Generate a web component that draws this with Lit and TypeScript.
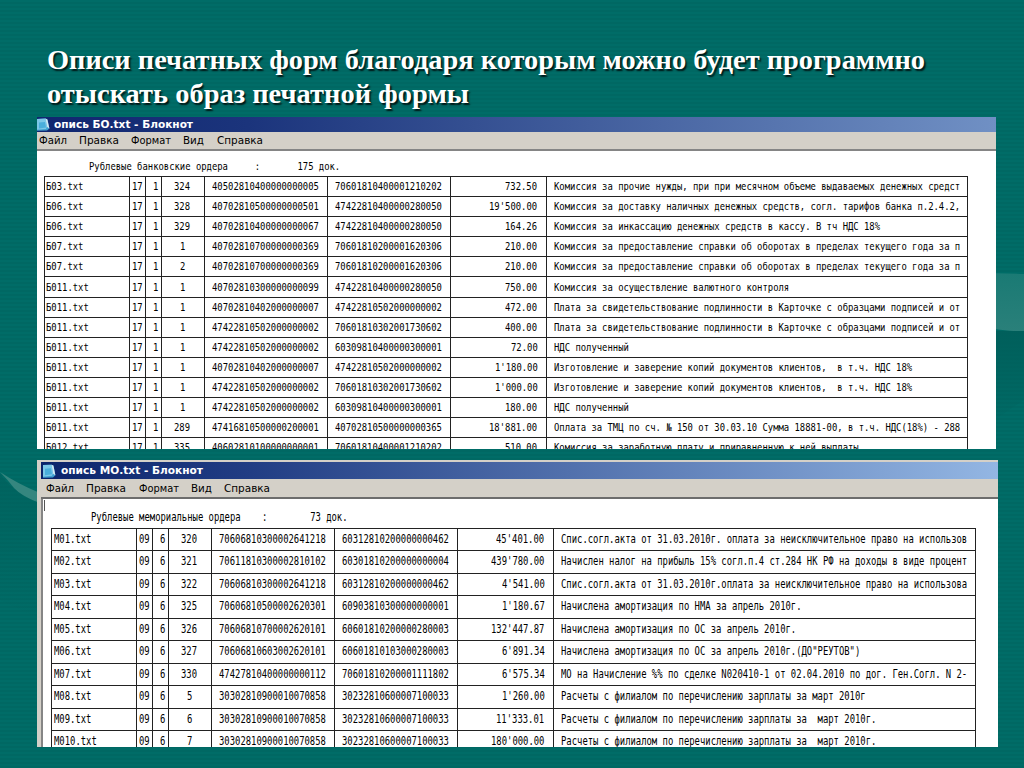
import { LitElement, html, css, svg } from "lit";
import { customElement, property } from "lit/decorators.js";

const CHAR = 5.345;

type Row = [string, string, string, string, string, string, string, string];

const BANK: Row[] = [
  ["Б03.txt", "17", "1", "324", "40502810400000000005", "70601810400001210202", "732.50", "Комиссия за прочие нужды, при при месячном объеме выдаваемых денежных средст"],
  ["Б06.txt", "17", "1", "328", "40702810500000000501", "47422810400000280050", "19'500.00", "Комиссия за доставку наличных денежных средств, согл. тарифов банка п.2.4.2,"],
  ["Б06.txt", "17", "1", "329", "40702810400000000067", "47422810400000280050", "164.26", "Комиссия за инкассацию денежных средств в кассу. В тч НДС 18%"],
  ["Б07.txt", "17", "1", "1", "40702810700000000369", "70601810200001620306", "210.00", "Комиссия за предоставление справки об оборотах в пределах текущего года за п"],
  ["Б07.txt", "17", "1", "2", "40702810700000000369", "70601810200001620306", "210.00", "Комиссия за предоставление справки об оборотах в пределах текущего года за п"],
  ["Б011.txt", "17", "1", "1", "40702810300000000099", "47422810400000280050", "750.00", "Комиссия за осуществление валютного контроля"],
  ["Б011.txt", "17", "1", "1", "40702810402000000007", "47422810502000000002", "472.00", "Плата за свидетельствование подлинности в Карточке с образцами подписей и от"],
  ["Б011.txt", "17", "1", "1", "47422810502000000002", "70601810302001730602", "400.00", "Плата за свидетельствование подлинности в Карточке с образцами подписей и от"],
  ["Б011.txt", "17", "1", "1", "47422810502000000002", "60309810400000300001", "72.00", "НДС полученный"],
  ["Б011.txt", "17", "1", "1", "40702810402000000007", "47422810502000000002", "1'180.00", "Изготовление и заверение копий документов клиентов,  в т.ч. НДС 18%"],
  ["Б011.txt", "17", "1", "1", "47422810502000000002", "70601810302001730602", "1'000.00", "Изготовление и заверение копий документов клиентов,  в т.ч. НДС 18%"],
  ["Б011.txt", "17", "1", "1", "47422810502000000002", "60309810400000300001", "180.00", "НДС полученный"],
  ["Б011.txt", "17", "1", "289", "47416810500000200001", "40702810500000000365", "18'881.00", "Оплата за ТМЦ по сч. № 150 от 30.03.10 Сумма 18881-00, в т.ч. НДС(18%) - 288"],
  ["Б012.txt", "17", "1", "335", "40602810100000000001", "70601810400001210202", "510.00", "Комиссия за заработную плату и приравненную к ней выплаты"],
];

const MEMO: Row[] = [
  ["М01.txt", "09", "6", "320", "70606810300002641218", "60312810200000000462", "45'401.00", "Спис.согл.акта от 31.03.2010г. оплата за неисключительное право на использов"],
  ["М02.txt", "09", "6", "321", "70611810300002810102", "60301810200000000004", "439'780.00", "Начислен налог на прибыль 15% согл.п.4 ст.284 НК РФ на доходы в виде процент"],
  ["М03.txt", "09", "6", "322", "70606810300002641218", "60312810200000000462", "4'541.00", "Спис.согл.акта от 31.03.2010г.оплата за неисключительное право на использова"],
  ["М04.txt", "09", "6", "325", "70606810500002620301", "60903810300000000001", "1'180.67", "Начислена амортизация по НМА за апрель 2010г."],
  ["М05.txt", "09", "6", "326", "70606810700002620101", "60601810200000280003", "132'447.87", "Начислена амортизация по ОС за апрель 2010г."],
  ["М06.txt", "09", "6", "327", "70606810603002620101", "60601810103000280003", "6'891.34", "Начислена амортизация по ОС за апрель 2010г.(ДО\"РЕУТОВ\")"],
  ["М07.txt", "09", "6", "330", "47427810400000000112", "70601810200001111802", "6'575.34", "МО на Начисление %% по сделке N020410-1 от 02.04.2010 по дог. Ген.Согл. N 2-"],
  ["М08.txt", "09", "6", "5", "30302810900010070858", "30232810600007100033", "1'260.00", "Расчеты с филиалом по перечислению зарплаты за март 2010г"],
  ["М09.txt", "09", "6", "6", "30302810900010070858", "30232810600007100033", "11'333.01", "Расчеты с филиалом по перечислению зарплаты за  март 2010г."],
  ["М010.txt", "09", "6", "7", "30302810900010070858", "30232810600007100033", "180'000.00", "Расчеты с филиалом по перечислению зарплаты за  март 2010г."],
];

/** Single line of text stretched horizontally to an exact width. */
@customElement("fit-text")
class FitText extends LitElement {
  @property() text = "";
  @property({ type: Number }) width = 0;

  static styles = css`
    :host { display: inline-block; flex: none; white-space: pre; }
    .ink { display: inline-block; transform-origin: 0 50%; }
  `;

  render() {
    return html`<span class="ink">${this.text}</span>`;
  }

  updated() {
    this.style.width = `${this.width}px`;
    const ink = this.renderRoot.querySelector(".ink") as HTMLElement;
    ink.style.transform = "none";
    const natural = ink.getBoundingClientRect().width;
    if (natural > 0) ink.style.transform = `scaleX(${this.width / natural})`;
  }
}

const mono = (text: string) => html`<fit-text .text=${text} .width=${text.length * CHAR}></fit-text>`;

@customElement("notepad-window")
class NotepadWindow extends LitElement {
  @property() name = "";
  @property({ type: Number }) nameWidth = 0;
  @property({ attribute: false }) menu: [string, number][] = [];
  @property() summary = "";
  @property({ attribute: false }) rows: Row[] = [];
  @property({ reflect: true }) kind = "bank";

  static styles = css`
    :host { display: flex; flex-direction: column; overflow: hidden; background: #fff; color: #000;
      font-family: "DejaVu Sans", sans-serif; box-sizing: border-box; }
    .title { display: flex; align-items: center; flex: none; height: 15px; color: #fff; font-size: 9.8px;
      font-weight: bold; line-height: 15px; background: linear-gradient(90deg, #10266f 0%, #1b347c 22%, #7090c4 100%); }
    .logo { width: 13px; height: 13px; margin-right: 4px; flex: none; }
    .menu { display: flex; gap: 12.3px; flex: none; height: 17px; padding-left: 1.5px; background: #d4d0c8;
      font-size: 9.6px; line-height: 17px; border-bottom: 2px solid #858585; }
    .page { flex: 1; min-height: 0; overflow: hidden; font-family: "DejaVu Sans Mono", monospace; font-size: 10.6px; }
    .summary { display: block; padding: 8px 0 0 51.5px; height: 17px; line-height: 14px; }
    .grid { margin-left: 7px; width: 924px; border-top: 1px solid #222; border-left: 1px solid #222; box-sizing: border-box; }
    .row { display: grid; grid-template-columns: 85px 16px 16px 43px 123px 122.5px 96px 1fr; height: 20.1px; }
    .cell { box-sizing: border-box; border-right: 1px solid #222; border-bottom: 1px solid #222; display: flex;
      align-items: center; justify-content: center; line-height: 18px; padding-bottom: 1px; overflow: hidden; }
    .c0, .c7 { justify-content: flex-start; }
    .c0 { padding-left: 1px; }
    .c7 { padding-left: 7px; }
    .c2 { justify-content: flex-end; padding-right: 3px; }
    .c3, .c4, .c5 { padding-right: 1px; }
    .c6 { justify-content: flex-end; padding-right: 8px; }

    :host([kind="memo"]) { border-top: 2px solid #d4d0c8; border-left: 4px solid #d4d0c8; }
    :host([kind="memo"]) .title { height: 17px; line-height: 17px; padding-left: 2px; font-size: 10.2px;
      background: linear-gradient(90deg, #0b246b 0%, #213d84 22%, #93b6e3 100%); }
    :host([kind="memo"]) .logo { height: 14px; margin-right: 5px; }
    :host([kind="memo"]) .menu { height: 18px; line-height: 19px; padding-left: 5px; font-size: 10.4px; border-bottom-color: #6d6d6d; }
    :host([kind="memo"]) .page { border-left: 2px solid #858585; font-size: 11.6px; }
    :host([kind="memo"]) .caret { width: 1px; height: 11px; margin: 1px 0 0 1px; background: #555; }
    :host([kind="memo"]) .summary { padding: 0 0 0 48px; margin-top: -1px; height: 17.5px; line-height: 14px; }
    :host([kind="memo"]) .grid { margin-left: 8px; width: 925px; }
    :host([kind="memo"]) .row { height: 22.5px; }
    :host([kind="memo"]) .cell { line-height: 21px; padding-bottom: 0; }
    :host([kind="memo"]) .c0 { padding-left: 1.5px; }
  `;

  render() {
    return html`
      <div class="title">
        ${svg`<svg class="logo" viewBox="0 0 13 13" preserveAspectRatio="none">
          <path d="M0 1 8.5 .6 10.4 1.5 12.4 10.5 10 12.6 0 12.8Z" fill="#3f9fd0"/>
          <path d="M0 1 8.5 .6 10 8.5 9 11 0 11.8Z" fill="#7cc8e8"/>
          <path d="M2 4.5 8 4 9 9.5 2 10.5Z" fill="#4aaedb"/>
          <path d="M8.5 .6 10.4 1.5 12.4 10.5 10.2 9Z" fill="#d3e9f2"/>
        </svg>`}
        <fit-text .text=${this.name} .width=${this.nameWidth}></fit-text>
      </div>
      <div class="menu">${this.menu.map(([t, w]) => html`<fit-text .text=${t} .width=${w}></fit-text>`)}</div>
      <div class="page">
        ${this.kind === "memo" ? html`<div class="caret"></div>` : null}
        <div class="summary">${mono(this.summary)}</div>
        <div class="grid">
          ${this.rows.map((r) => html`<div class="row">${r.map((t, i) => html`<div class="cell c${i}">${mono(t)}</div>`)}</div>`)}
        </div>
      </div>
    `;
  }
}

@customElement("app-root")
class AppRoot extends LitElement {
  static styles = css`
    :host { display: block; position: relative; width: 1024px; height: 768px; overflow: hidden;
      background: repeating-linear-gradient(180deg, #006c67 0 2px, #006863 2px 4px); }
    .swoosh { position: absolute; inset: 0; width: 1024px; height: 768px; }
    .slide { position: relative; display: flex; flex-direction: column; padding: 43px 26px 0 37px; }
    .heading { display: flex; flex-direction: column; height: 74px; margin: 0 0 0 10px; color: #fff;
      font: bold 26.5px/34px "Liberation Serif", serif;
      text-shadow: 1.5px 1.5px 1.5px rgba(0, 0, 0, 0.8); }
    .bank { width: 959px; height: 332px; }
    .memo { width: 961px; height: 287px; margin-top: 11px; }
  `;

  render() {
    return html`
      <svg class="swoosh" viewBox="0 0 1024 768">
        <defs>
          <linearGradient id="r" x1="0" y1="0" x2="0" y2="1">
            <stop offset="0" stop-color="#1a7a74"/><stop offset="1" stop-color="#2a807a"/>
          </linearGradient>
          <linearGradient id="d" x1="0" y1="0" x2="0" y2="1">
            <stop offset="0" stop-color="#005f5b"/><stop offset="1" stop-color="#005f5b" stop-opacity="0"/>
          </linearGradient>
        </defs>
        <path d="M980 273.500Q1005 273 1024 274V331Q1006 332 980 326Z" fill="url(#r)"/>
        <path d="M980 331H1024V400L980 430Z" fill="url(#d)"/>
        <path d="M0 472Q18 484 40 493V503Q22 497 14 488Q8 480 0 472Z" fill="#35867f"/>
        <path d="M0 474Q16 495 40 503V620L0 600Z" fill="url(#d)" opacity=".6"/>
      </svg>
      <div class="slide">
        <h1 class="heading">
          <fit-text .text=${"Описи печатных форм благодаря которым можно будет программно"} .width=${878}></fit-text>
          <fit-text .text=${"отыскать образ печатной формы"} .width=${422}></fit-text>
        </h1>
        <notepad-window class="bank" kind="bank" .name=${"опись БО.txt - Блокнот"} .nameWidth=${139}
          .menu=${[["Файл", 28], ["Правка", 40], ["Формат", 40], ["Вид", 21], ["Справка", 46]]}
          .summary=${"Рублевые банковские ордера     :       175 док."} .rows=${BANK}></notepad-window>
        <notepad-window class="memo" kind="memo" .name=${"опись МО.txt - Блокнот"} .nameWidth=${142}
          .menu=${[["Файл", 28], ["Правка", 40], ["Формат", 40], ["Вид", 21], ["Справка", 46]]}
          .summary=${"Рублевые мемориальные ордера    :        73 док."} .rows=${MEMO}></notepad-window>
      </div>
    `;
  }
}
